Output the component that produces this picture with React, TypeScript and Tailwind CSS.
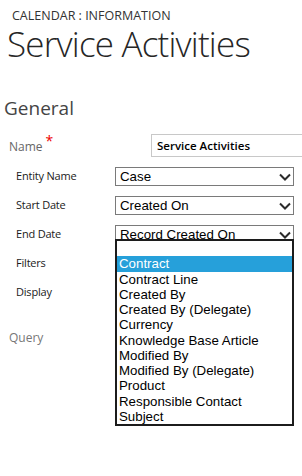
import React from "react";

const label = "font-['Open_Sans',sans-serif] text-[11px] tracking-[-0.2px] text-[#1a1a1a]";
const arial = "font-['Liberation_Sans',Arial,sans-serif]";

const options = [
  "Contract",
  "Contract Line",
  "Created By",
  "Created By (Delegate)",
  "Currency",
  "Knowledge Base Article",
  "Modified By",
  "Modified By (Delegate)",
  "Product",
  "Responsible Contact",
  "Subject",
];

function Chevron() {
  return (
    <svg width="12" height="8" viewBox="0 0 12 8" className="shrink-0">
      <polyline points="1,1.5 6,6.5 11,1.5" fill="none" stroke="#2b2b2b" strokeWidth="2" />
    </svg>
  );
}

function Select({ value, open = false }: { value: string; open?: boolean }) {
  return (
    <div className="relative w-[179px] h-[19px]">
      <div
        className={`${arial} flex items-center justify-between h-full border border-[#7a7a7a] pl-[4px] pr-[2px] text-[13.3px] text-black leading-none`}
      >
        <span>{value}</span>
        <Chevron />
      </div>
      {open && (
        <ul
          className={`${arial} absolute left-0 top-[14px] z-10 w-[179px] border-2 border-[#1c1c1c] bg-white text-[13.3px] text-black`}
        >
          <li className="h-[15.25px]" />
          {options.map((o, i) => (
            <li
              key={o}
              className={`h-[15.25px] leading-[15.25px] pl-[2px] whitespace-nowrap ${
                i === 0 ? "bg-[#26a0da] text-white" : ""
              }`}
            >
              {o}
            </li>
          ))}
        </ul>
      )}
    </div>
  );
}

function Row({ name, children }: { name: string; children?: React.ReactNode }) {
  return (
    <div className="flex items-center h-[19px]">
      <div className={`${label} w-[115px] pl-[16px]`}>{name}</div>
      {children}
    </div>
  );
}

export default function App() {
  return (
    <div className="relative w-[302px] h-[476px] overflow-hidden bg-white">
      <div className="pl-[12px] pt-[8px] font-['Open_Sans',sans-serif] text-[12.5px] leading-[16px] text-[#333]">
        CALENDAR : INFORMATION
      </div>
      <h1 className="pl-[7px] font-['Open_Sans',sans-serif] font-light text-[35px] leading-[40px] tracking-[-0.8px] text-[#262626]">
        Service Activities
      </h1>
      <h2 className="mt-[32px] pl-[4px] font-['Open_Sans',sans-serif] text-[19px] leading-[24px] text-[#444]">
        General
      </h2>

      <div className="mt-[14px] flex items-center h-[23px]">
        <div className="w-[151px] pl-[9px] font-['Open_Sans',sans-serif] text-[12px] text-[#666]">
          Name
          <span className="relative -top-[5px] ml-[3px] text-[#e00] text-[14px]">*</span>
        </div>
        <div className="flex-1 h-full border border-r-0 border-[#c8c8c8] pl-[5px] flex items-center font-['Open_Sans',sans-serif] font-semibold text-[11.5px] text-black">
          Service Activities
        </div>
      </div>

      <div className="mt-[10px] flex flex-col gap-[10px]">
        <Row name="Entity Name">
          <Select value="Case" />
        </Row>
        <Row name="Start Date">
          <Select value="Created On" />
        </Row>
        <Row name="End Date">
          <Select value="Record Created On" open />
        </Row>
        <Row name="Filters" />
        <Row name="Display" />
      </div>

      <div className="mt-[26px] h-[19px] flex items-center pl-[9px] font-['Open_Sans',sans-serif] text-[12px] text-[#777]">
        Query
      </div>
    </div>
  );
}
